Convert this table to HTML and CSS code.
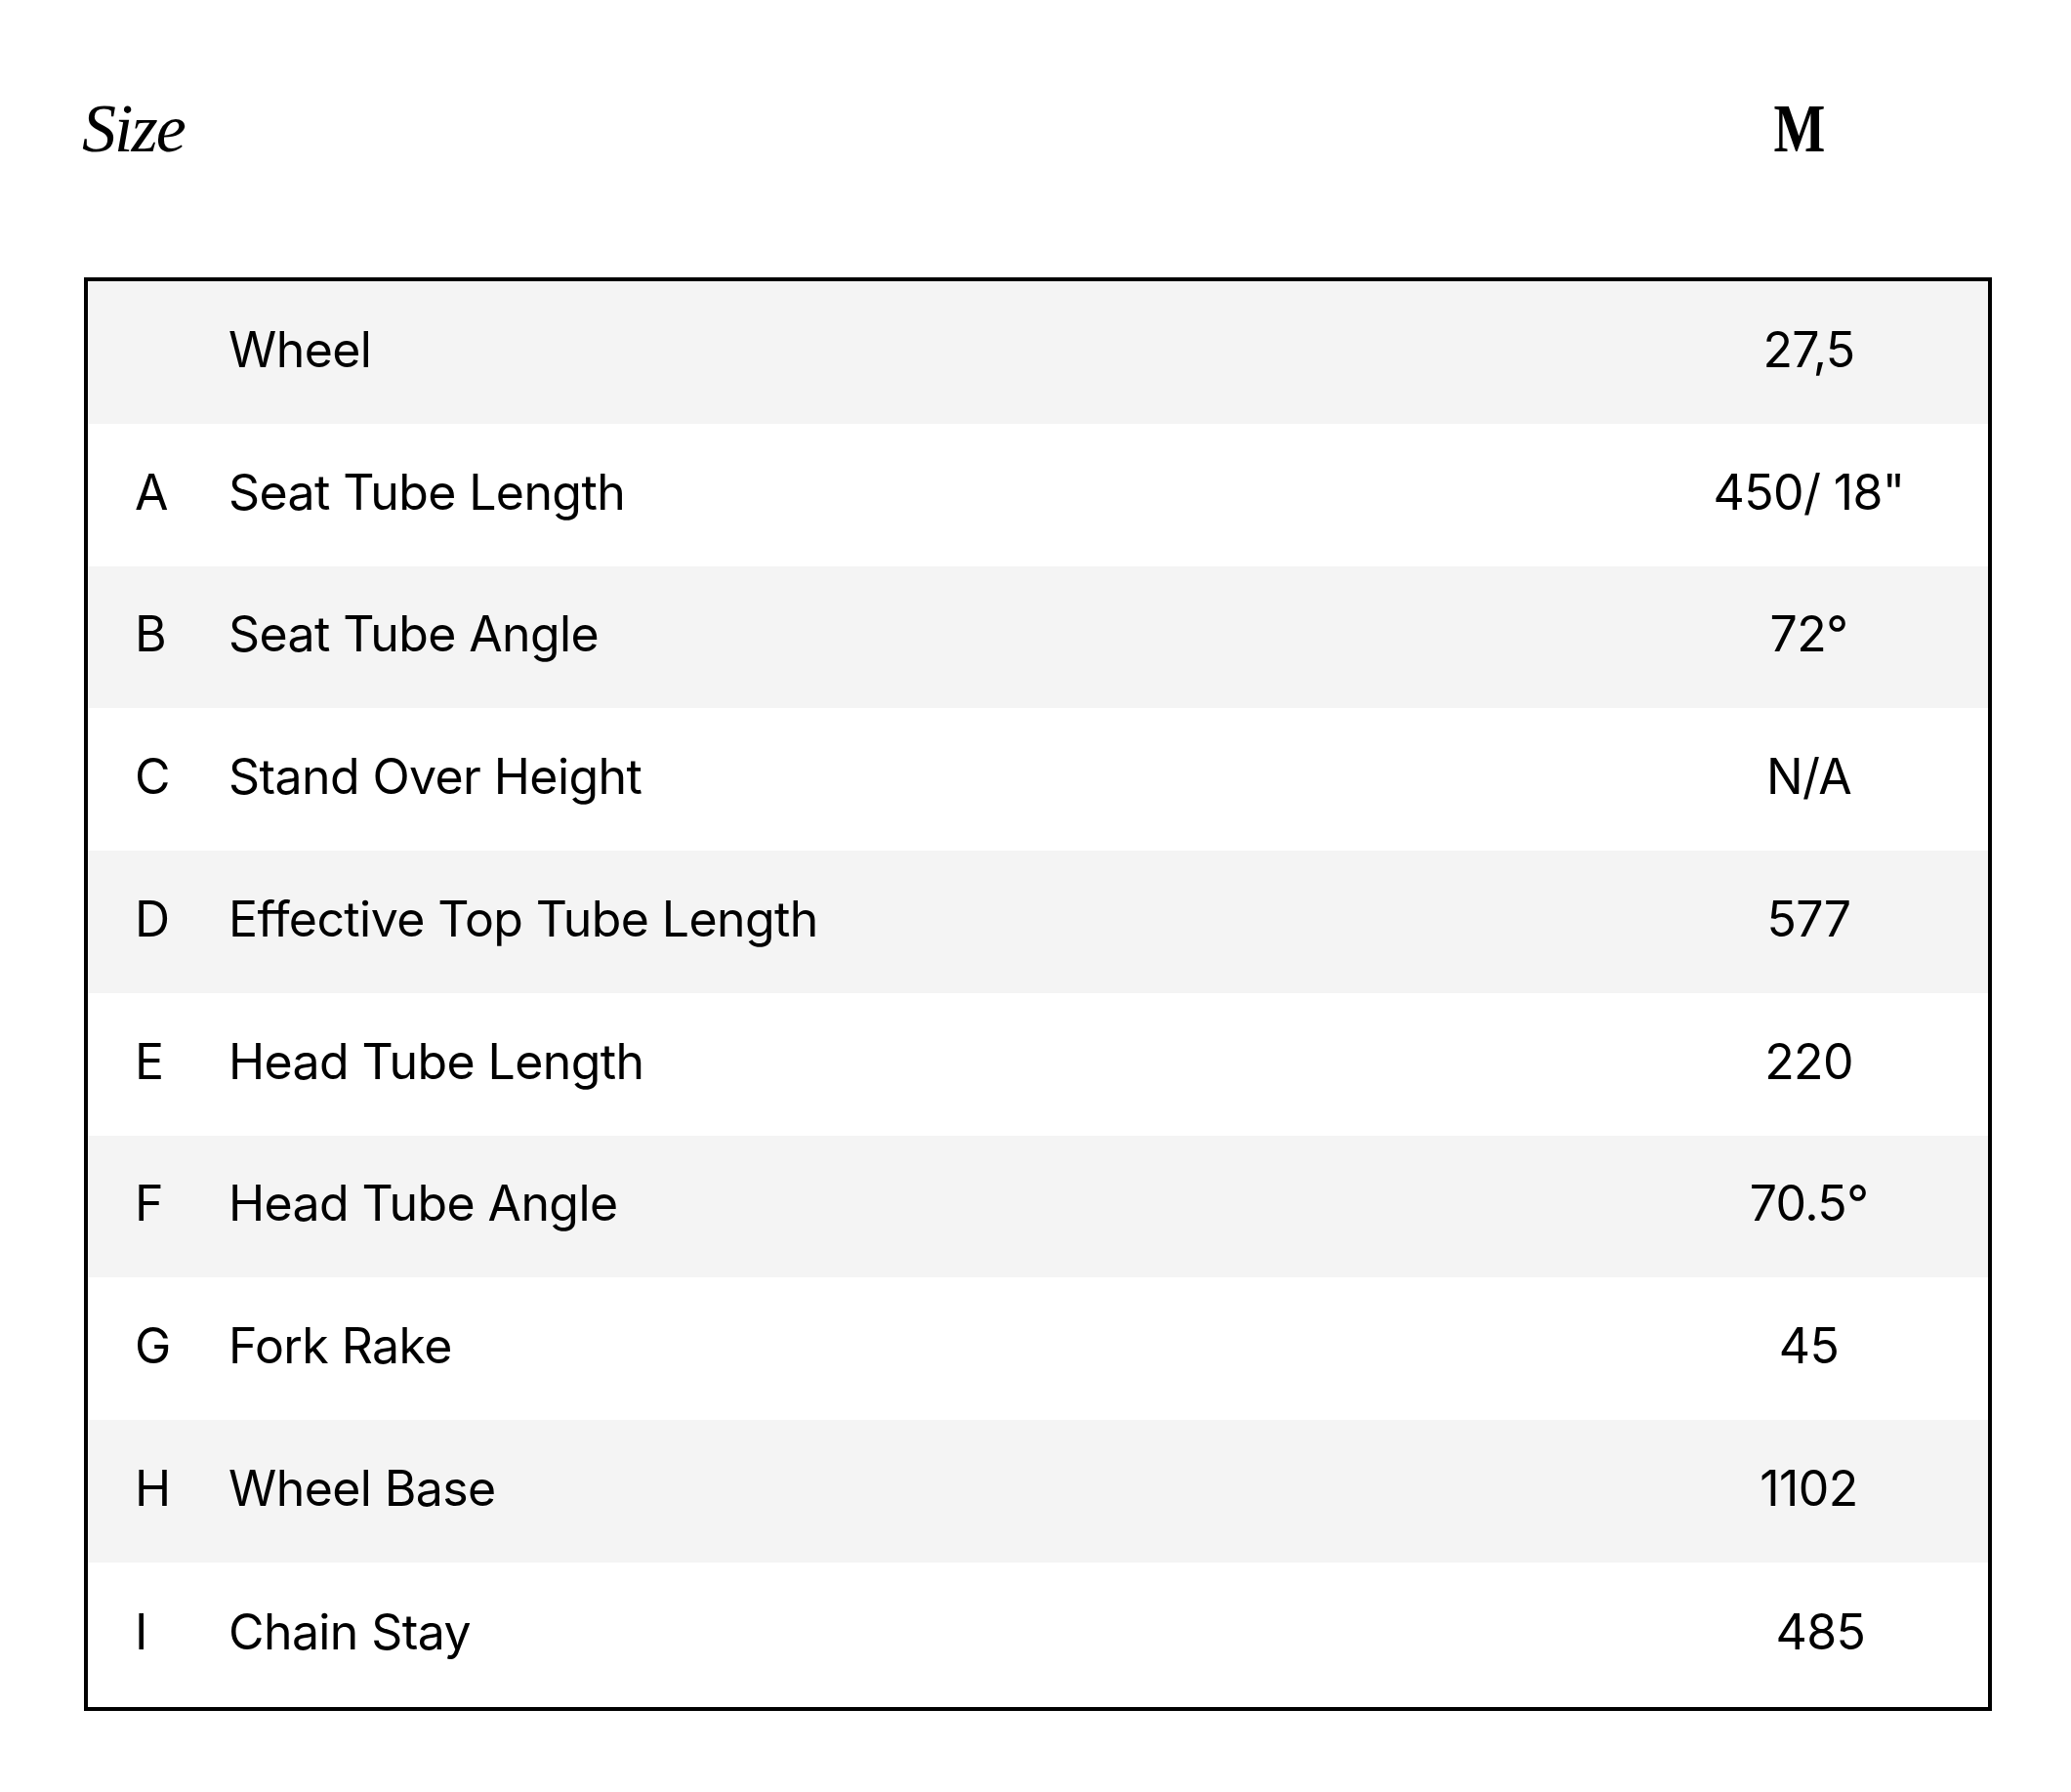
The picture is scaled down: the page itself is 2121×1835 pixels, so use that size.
FILE: index.html
```html
<!DOCTYPE html>
<html lang="en">
<head>
<meta charset="utf-8">
<title>Geometry</title>
<link rel="stylesheet" href="styles.css">
</head>
<body>
<div class="page">
  <div class="size-head">
    <div class="size-title">Size</div>
    <div class="size-col"><span class="size-m">M</span></div>
  </div>
  <div class="geo-table">
    <div class="geo-row alt"><div class="key"></div><div class="name">Wheel</div><div class="val">27,5</div></div>
    <div class="geo-row"><div class="key">A</div><div class="name">Seat Tube Length</div><div class="val">450/ 18"</div></div>
    <div class="geo-row alt"><div class="key">B</div><div class="name">Seat Tube Angle</div><div class="val">72°</div></div>
    <div class="geo-row"><div class="key">C</div><div class="name">Stand Over Height</div><div class="val">N/A</div></div>
    <div class="geo-row alt"><div class="key">D</div><div class="name">Effective Top Tube Length</div><div class="val">577</div></div>
    <div class="geo-row"><div class="key">E</div><div class="name">Head Tube Length</div><div class="val">220</div></div>
    <div class="geo-row alt"><div class="key">F</div><div class="name">Head Tube Angle</div><div class="val">70.5°</div></div>
    <div class="geo-row"><div class="key">G</div><div class="name">Fork Rake</div><div class="val">45</div></div>
    <div class="geo-row alt"><div class="key">H</div><div class="name">Wheel Base</div><div class="val">1102</div></div>
    <div class="geo-row last"><div class="key">I</div><div class="name">Chain Stay</div><div class="val val-shift">485</div></div>
  </div>
</div>
</body>
</html>
```

FILE: styles.css
```css
html, body {
  margin: 0;
  padding: 0;
  background: #ffffff;
}

body {
  font-family: "Inter", "Liberation Sans", sans-serif;
  color: #000000;
}

.page {
  padding: 0 81px 0 86px;
}

.size-head {
  display: flex;
  justify-content: space-between;
  align-items: flex-start;
  padding-top: 97px;
  height: 70px;
  margin-bottom: 117px;
}

.size-title {
  font-family: "Liberation Serif", "Times New Roman", serif;
  font-style: italic;
  font-size: 70px;
  line-height: 70px;
  letter-spacing: -2px;
  margin-left: -2px;
}

.size-col {
  width: 367px;
  margin-right: 13px;
  text-align: center;
}

.size-m {
  display: inline-block;
  font-family: "Liberation Serif", "Times New Roman", serif;
  font-weight: 700;
  font-size: 70px;
  line-height: 70px;
  transform: scaleX(0.8);
}

.geo-table {
  width: 1954px;
  border: 4px solid #000000;
  box-sizing: border-box;
}

.geo-row {
  display: grid;
  grid-template-columns: 96px 1fr 367px;
  align-items: center;
  height: 145.75px;
  box-sizing: border-box;
  padding-left: 48px;
  padding-bottom: 6px;
  font-size: 50px;
  letter-spacing: -0.6px;
  background: #ffffff;
}

.geo-row.alt {
  background: #f4f4f4;
}

.geo-row.last {
  height: 148px;
}

.key,
.name {
  white-space: nowrap;
}

.val {
  text-align: center;
  white-space: nowrap;
}

.val-shift {
  padding-left: 24px;
}
```
